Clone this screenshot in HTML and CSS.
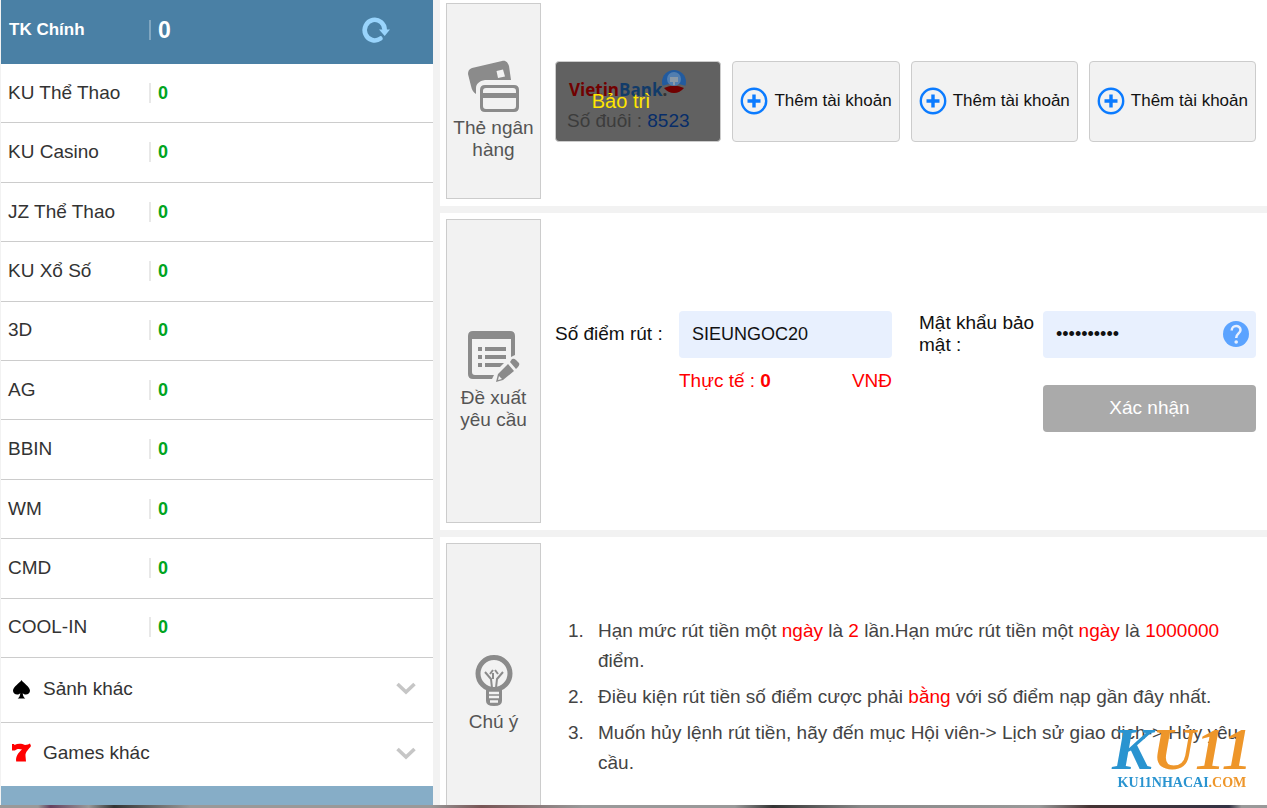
FILE: index.html
```html
<!DOCTYPE html>
<html lang="vi">
<head>
<meta charset="utf-8">
<meta name="viewport" content="width=device-width, initial-scale=1">
<title>Rút tiền</title>
<link rel="stylesheet" href="styles.css">
</head>
<body>
<div class="page">
  <aside class="sidebar">
    <div class="wallet wallet-main">
      <span class="wallet-name">TK Chính</span><b class="wallet-value">0</b>
      <button class="refresh" type="button" aria-label="Làm mới">
        <svg width="28" height="26" viewBox="0 0 28 26"><path d="M18.500 21.500A10 10.300 0 1 1 22.700 13" fill="none" stroke="#99d4fc" stroke-width="4.600" stroke-linecap="round"/><path d="M17 12.500H28L22.700 19Z" fill="#99d4fc"/></svg>
      </button>
    </div>
    <div class="wallet"><span class="wallet-name">KU Thể Thao</span><b class="wallet-value">0</b></div>
    <div class="wallet"><span class="wallet-name">KU Casino</span><b class="wallet-value">0</b></div>
    <div class="wallet"><span class="wallet-name">JZ Thể Thao</span><b class="wallet-value">0</b></div>
    <div class="wallet"><span class="wallet-name">KU Xổ Số</span><b class="wallet-value">0</b></div>
    <div class="wallet"><span class="wallet-name">3D</span><b class="wallet-value">0</b></div>
    <div class="wallet"><span class="wallet-name">AG</span><b class="wallet-value">0</b></div>
    <div class="wallet"><span class="wallet-name">BBIN</span><b class="wallet-value">0</b></div>
    <div class="wallet"><span class="wallet-name">WM</span><b class="wallet-value">0</b></div>
    <div class="wallet"><span class="wallet-name">CMD</span><b class="wallet-value">0</b></div>
    <div class="wallet"><span class="wallet-name">COOL-IN</span><b class="wallet-value">0</b></div>
    <button class="group" type="button">
      <svg width="20" height="20" viewBox="0 0 20 20"><path d="M9.500 1C11 4 18 7.500 18 11.800C18 15.500 13 16.700 10.700 14.200C10.900 16.500 11.500 18 13.300 19.500H5.700C7.500 18 8.100 16.500 8.300 14.200C6 16.700 1 15.500 1 11.800C1 7.500 8 4 9.500 1Z" fill="#000"/></svg>
      <span class="group-name">Sảnh khác</span>
      <svg width="20" height="13" viewBox="0 0 20 13"><path d="M1.500 2L10 10L18.500 2" fill="none" stroke="#c6c6c6" stroke-width="3.600"/></svg>
    </button>
    <button class="group" type="button">
      <svg width="20" height="20" viewBox="0 0 20 20"><path d="M0 1H2L2.500 2C6 0 10 .5 13 2L16 1.500L18 .5L19 3C17 6 13 9 13.500 13L14 18.500H4.200C3.500 13.500 6 10 10 6.500C7 5.500 4 6 3 7.500H0Z" fill="#f00"/></svg>
      <span class="group-name">Games khác</span>
      <svg width="20" height="13" viewBox="0 0 20 13"><path d="M1.500 2L10 10L18.500 2" fill="none" stroke="#c6c6c6" stroke-width="3.600"/></svg>
    </button>
    <div class="sidebar-end"></div>
  </aside>

  <main class="main">
    <section class="panel panel-banks">
      <h2 class="tab">
        <svg width="52" height="52" viewBox="0 0 52 52" fill="#8b8b8b"><path fill-rule="evenodd" d="M4 7L34 0C38-1 40 2 41 5L43 19H17C11 20 8 23 8 27V33C5 31 4 29 3 25L0 13C0 10 1 8 4 7ZM28.500 10L30 17L37 15.500L35 8.500Z"/><path fill-rule="evenodd" d="M17 24H46Q51 24 51 29V46Q51 51 46 51H17Q12 51 12 46V29Q12 24 17 24ZM18 27Q15 27 15 30V32H48V30Q48 27 45 27ZM15 37V45Q15 48 18 48H45Q48 48 48 45V37Z"/></svg>
        <span>Thẻ ngân hàng</span>
      </h2>
      <div class="banks">
        <button class="bank bank-off" type="button">
          <span class="bank-logo"><span class="vietin">Vietin</span>Bank<span class="logo-dot">.</span>
            <svg width="24" height="24" viewBox="0 0 24 24"><circle cx="12" cy="12" r="12" fill="#225b9f"/><path d="M0 16Q12 11 24 16A12.500 12.500 0 0 1 0 16Z" fill="#616161"/><path d="M2 18Q12 13 22 18Q18 23 12 23T2 18Z" fill="#710000"/><circle cx="12" cy="9" r="7" fill="#527eaf"/><path d="M8 7H16V12H13V15H11V12H8Z" fill="#8a99a7"/></svg>
          </span>
          <span class="bank-tail">Số đuôi : <span class="bank-digits">8523</span></span>
          <span class="bank-state">Bảo trì</span>
        </button>
        <button class="bank" type="button"><svg width="28" height="28" viewBox="0 0 28 28"><path d="M14 7.500V20.500M7.500 14H20.500" stroke="#0b7bff" stroke-width="3.400"/><circle cx="14" cy="14" r="12.200" fill="none" stroke="#0b7bff" stroke-width="2.400"/></svg>Thêm tài khoản</button>
        <button class="bank" type="button"><svg width="28" height="28" viewBox="0 0 28 28"><path d="M14 7.500V20.500M7.500 14H20.500" stroke="#0b7bff" stroke-width="3.400"/><circle cx="14" cy="14" r="12.200" fill="none" stroke="#0b7bff" stroke-width="2.400"/></svg>Thêm tài khoản</button>
        <button class="bank" type="button"><svg width="28" height="28" viewBox="0 0 28 28"><path d="M14 7.500V20.500M7.500 14H20.500" stroke="#0b7bff" stroke-width="3.400"/><circle cx="14" cy="14" r="12.200" fill="none" stroke="#0b7bff" stroke-width="2.400"/></svg>Thêm tài khoản</button>
      </div>
    </section>

    <section class="panel panel-request">
      <h2 class="tab">
        <svg width="52" height="52" viewBox="0 0 52 52" fill="#8b8b8b"><path fill-rule="evenodd" d="M5 0H42Q47 0 47 5V24L43 26V8H4V41Q4 44 7 44H26L24 48H5Q0 48 0 43V5Q0 0 5 0Z"/><path d="M10 16H14V20H10ZM17 16H38V20H17ZM10 24H14V28H10ZM17 24H38V28H17ZM10 32H14V36H10ZM17 32H36L32 36H17ZM44 28Q46 27 48 29L51 32Q52 34 50 36L48 38L42 31ZM40 33L46 40L35 49L28 51L30 43ZM31 45L30 49L34 48Z" fill-rule="evenodd"/></svg>
        <span>Đề xuất yêu cầu</span>
      </h2>
      <form class="request">
        <div class="field">
          <label for="points">Số điểm rút :</label>
          <input id="points" class="entry" type="text" value="SIEUNGOC20">
          <div class="actual"><span>Thực tế : <b>0</b></span><span>VNĐ</span></div>
        </div>
        <div class="field">
          <label for="secret">Mật khẩu bảo mật :</label>
          <div class="secret">
            <input id="secret" class="entry" type="password" value="0000000000">
            <button class="help" type="button" aria-label="Trợ giúp"><svg width="26" height="26" viewBox="0 0 26 26"><circle cx="13" cy="13" r="13" fill="#5ba3ff"/><path d="M8.700 9.500C8.700 3.500 17.500 3.700 17.500 9C17.500 12.500 13.200 12.500 13.200 17" fill="none" stroke="#e8f0fe" stroke-width="2.500"/><circle cx="13.200" cy="21" r="1.800" fill="#e8f0fe"/></svg></button>
          </div>
          <button class="confirm" type="button">Xác nhận</button>
        </div>
      </form>
    </section>

    <section class="panel panel-notes">
      <h2 class="tab">
        <svg width="52" height="52" viewBox="0 0 52 52" fill="none" stroke="#8b8b8b"><circle cx="26" cy="18.500" r="16" stroke-width="5"/><path d="M24 33L23 24L17 17M28 33L29 24L35 17M22 19L25 15M30 19L27 15M25 24V18" stroke-width="2"/><path d="M18 35H34V46Q34 51 26 51T18 46Z" fill="#8b8b8b" stroke="none"/><path d="M21 38H31M21 42H31M22 46.500H30" stroke="#f2f2f2" stroke-width="2.400"/></svg>
        <span>Chú ý</span>
      </h2>
      <ol class="notes">
        <li>Hạn mức rút tiền một <em>ngày</em> là <em>2</em> lần.Hạn mức rút tiền một <em>ngày</em> là <em>1000000</em> điểm.</li>
        <li>Điều kiện rút tiền số điểm cược phải <em>bằng</em> với số điểm nạp gần đây nhất.</li>
        <li>Muốn hủy lệnh rút tiền, hãy đến mục Hội viên-&gt; Lịch sử giao dịch-&gt; Hủy yêu cầu.</li>
      </ol>
    </section>
  </main>
</div>
<div class="photo-edge"></div>
<div class="watermark">
  <span class="mark"><span class="mark-k">K</span>U11</span>
  <span class="site"><span class="mark-k">KU11NHACAI</span>.COM</span>
</div>
</body>
</html>
```
FILE: styles.css
```css
* { box-sizing: border-box; }

body {
  display: flex;
  flex-direction: column;
  height: 100vh;
  margin: 0;
  overflow: hidden;
  background: #f2f2f2;
  color: #333;
  font: 19px/22px "Liberation Sans", Arial, sans-serif;
}

button { margin: 0; border: 0; padding: 0; background: none; color: inherit; font: inherit; }
svg { display: block; flex: none; overflow: visible; }

.page {
  display: grid;
  grid-template-columns: 432px 1fr;
  gap: 7px;
  flex: 1;
  min-height: 0;
  padding-left: 1px;
}

/* Wallet list */
.sidebar { display: flex; flex-direction: column; min-height: 0; background: #fff; }
.wallet {
  display: flex;
  flex: 1;
  align-items: center;
  border-bottom: 1px solid #ccc;
  padding: 0 43px 1px 7px;
}
.wallet-name { width: 141px; }
.wallet-value { border-left: 2px solid #e8e8e8; padding-left: 7px; color: #00a420; font-size: 18px; line-height: 20px; }
.wallet-main {
  flex: none;
  height: 64px;
  border: 0;
  padding: 0 43px 4px 8px;
  background: #4a80a5;
  color: #fff;
  font-size: 17px;
  font-weight: bold;
}
.wallet-main .wallet-name { width: 140px; }
.wallet-main .wallet-value { border-color: #80a6c0; color: #fff; font-size: 23px; }
.refresh { margin-left: auto; }
.group {
  display: flex;
  flex: none;
  align-items: center;
  height: 64px;
  padding: 0 17px 3px 11px;
  text-align: left;
}
.group + .group { border-top: 1px solid #ccc; }
.group-name { flex: 1; padding-left: 11px; }
.sidebar-end { flex: none; height: 19px; background: #86adc7; }

/* Panels */
.main { display: flex; flex-direction: column; gap: 7px; min-width: 0; min-height: 0; overflow: hidden; }
.panel { display: flex; flex: none; gap: 14px; padding: 6px 11px 7px 6px; background: #fff; }
.panel-banks { padding-top: 3px; }
.panel-banks .tab { min-height: 196px; }
.panel-request .tab { min-height: 304px; }
.panel-notes .tab { min-height: 282px; }
.tab {
  display: flex;
  flex: none;
  flex-direction: column;
  align-items: center;
  justify-content: center;
  gap: 4px;
  width: 95px;
  margin: 0;
  border: 1px solid #ccc;
  padding: 19px 6px 0;
  background: #f2f2f2;
  color: #555;
  font-size: 19px;
  font-weight: normal;
  text-align: center;
}

.banks { display: grid; flex: 1; grid-template-columns: repeat(4, 1fr); gap: 11px; align-items: center; }
.bank {
  position: relative;
  display: flex;
  align-items: center;
  gap: 6px;
  height: 81px;
  border: 1px solid #ccc;
  border-radius: 4px;
  padding: 0 7px;
  background: #f2f2f2;
  color: #111;
  font-size: 17px;
  white-space: nowrap;
}
.bank-off {
  flex-direction: column;
  align-items: flex-start;
  gap: 0;
  padding: 8px 11px;
  background: #616161;
  color: #3c3c3c;
  font-size: 19px;
}
.bank-logo { display: flex; align-items: center; height: 40px; padding-left: 2px; color: #123b69; font: bold 17px/48px "Open Sans", sans-serif; }
.bank-logo svg { align-self: flex-start; margin-left: -5px; }
.vietin { color: #710000; }
.logo-dot { color: #333; }
.bank-digits { color: #072d69; }
.bank-state { position: absolute; inset: 0; color: #ffe600; font-size: 20px; line-height: 78px; padding-right: 34px; text-align: center; }

/* Withdrawal form */
.request { display: grid; flex: 1; grid-template-columns: 1fr 1fr; gap: 27px; align-content: center; color: #111; }
.field { display: grid; grid-template-columns: 124px 1fr; align-items: center; align-content: start; }
.entry {
  display: block;
  width: 100%;
  height: 47px;
  border: 0;
  border-radius: 4px;
  padding: 0 13px;
  background: #e8f0fe;
  color: #111;
  font: 18px "Liberation Sans", Arial, sans-serif;
}
.secret { position: relative; }
.help { position: absolute; top: 10px; right: 7px; }
.actual { display: flex; grid-column: 2; justify-content: space-between; margin-top: 12px; color: #f00; }
.confirm { grid-column: 2; height: 47px; margin-top: 27px; border-radius: 4px; background: #aaa; color: #fff; }

/* Notes */
.notes {
  flex: 1;
  align-self: center;
  margin: 0;
  padding: 26px 0 0 13px;
  color: #444;
  line-height: 30px;
  list-style: none;
  counter-reset: note;
}
.notes li { padding-left: 30px; text-indent: -30px; counter-increment: note; }
.notes li::before { content: counter(note) "."; display: inline-block; width: 30px; text-indent: 0; }
.notes li + li { margin-top: 6px; }
.notes em { color: #f00; font-style: normal; }

.photo-edge {
  flex: none;
  height: 3px;
  background: linear-gradient(90deg, #999 3%, #65405e 4%, #999 7%, #333 9%, #999 15%, #999 34%, #755 38%, #999 46%, #999 58%, #333 61%, #888 68%, #999 82%, #433 86%, #334 97%, #999 98%);
}

/* Site mark floating over the page corner */
.watermark {
  position: fixed;
  right: 15px;
  bottom: 16px;
  display: flex;
  flex-direction: column;
  align-items: center;
  color: #ee962a;
  font-family: "Liberation Serif", "Times New Roman", serif;
  font-weight: bold;
  pointer-events: none;
}
.mark { font-size: 60px; font-style: italic; line-height: 50px; }
.site { font-size: 14px; line-height: 18px; }
.mark-k { color: #2a94d0; }
```
